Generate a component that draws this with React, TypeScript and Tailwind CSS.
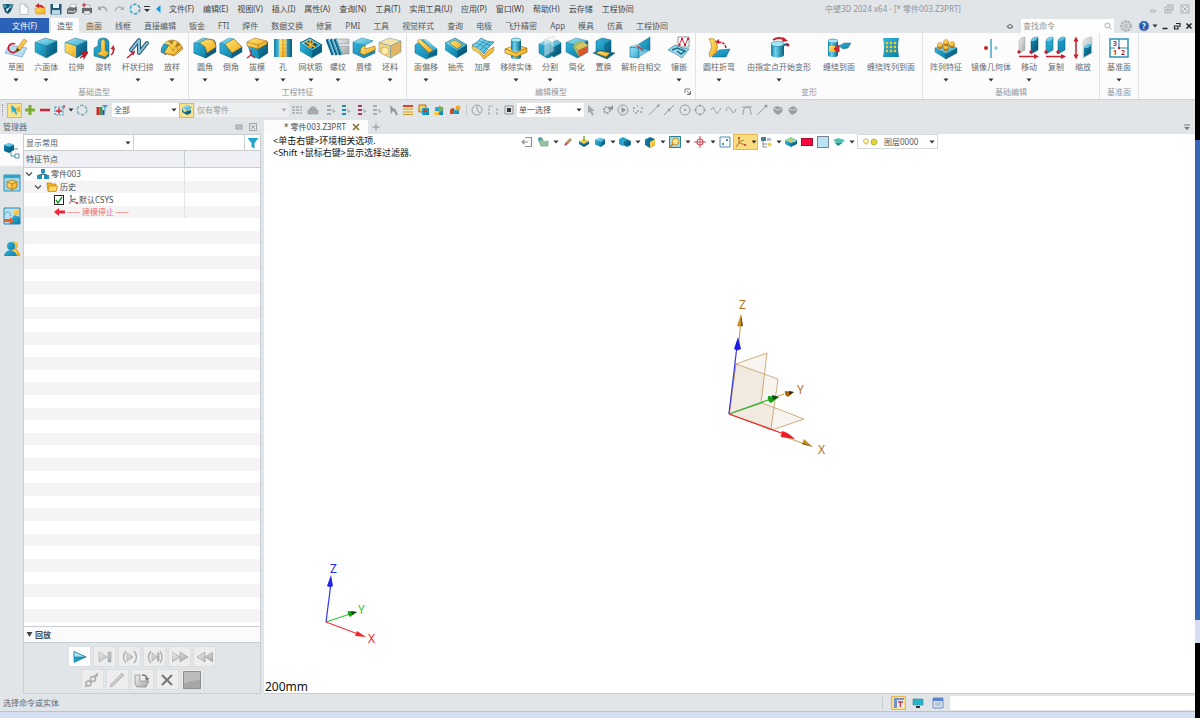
import { ReactNode } from 'react'
import clsx from 'clsx'

const MENUS = ['文件(F)', '编辑(E)', '视图(V)', '插入(I)', '属性(A)', '查询(N)', '工具(T)', '实用工具(U)', '应用(P)', '窗口(W)', '帮助(H)', '云存储', '工程协同']

const TABS = ['曲面', '线框', '直接编辑', '钣金', 'FTI', '焊件', '数据交换', '修复', 'PMI', '工具', '视觉样式', '查询', '电极', '飞升精密', 'App', '模具', '仿真', '工程协同']

const T = 'url(#tealTop)'
const L = 'url(#tealLeft)'
const R = 'url(#tealRight)'
const Y = 'url(#gold)'
const G = 'url(#grey)'

function Gradients() {
  return (
    <svg className="absolute h-0 w-0" aria-hidden="true">
      <defs>
        <linearGradient id="tealTop" x1="0" y1="0" x2="1" y2="1"><stop offset="0" stopColor="#9fe6f5" /><stop offset="1" stopColor="#2fa9cf" /></linearGradient>
        <linearGradient id="tealLeft" x1="0" y1="0" x2="1" y2="1"><stop offset="0" stopColor="#35b5dc" /><stop offset="1" stopColor="#0b7fa8" /></linearGradient>
        <linearGradient id="tealRight" x1="0" y1="0" x2="1" y2="1"><stop offset="0" stopColor="#1488b0" /><stop offset="1" stopColor="#07516f" /></linearGradient>
        <linearGradient id="gold" x1="0" y1="0" x2="1" y2="1"><stop offset="0" stopColor="#ffe873" /><stop offset="1" stopColor="#f2a81d" /></linearGradient>
        <linearGradient id="grey" x1="0" y1="0" x2="1" y2="1"><stop offset="0" stopColor="#f1f1f1" /><stop offset="1" stopColor="#a2a6a8" /></linearGradient>
        <linearGradient id="cyl" x1="0" y1="0" x2="1" y2="0"><stop offset="0" stopColor="#0d7ea6" /><stop offset=".35" stopColor="#6ed3ec" /><stop offset="1" stopColor="#07607f" /></linearGradient>
      </defs>
    </svg>
  )
}

function Svg({ s = 12, className = '', children }: { s?: number; className?: string; children: ReactNode }) {
  return <svg viewBox={`0 0 ${s} ${s}`} width={s} height={s} className={clsx('shrink-0', className)} fill="none" aria-hidden="true">{children}</svg>
}

function Cube({ t = T, l = L, r = R }: { t?: string; l?: string; r?: string }) {
  return (
    <g stroke="#0c5d7a" strokeWidth=".4" strokeLinejoin="round">
      <path d="M1 6.500 11 2 23 5 12.500 10z" fill={t} />
      <path d="M1 6.500 12.500 10v12L1 16z" fill={l} />
      <path d="M12.500 10 23 5v11l-10.500 6z" fill={r} />
    </g>
  )
}

function Slab() {
  return (
    <g stroke="#0c5d7a" strokeWidth=".4" strokeLinejoin="round">
      <path d="M1 12 11 8l12 4-11 6z" fill={T} />
      <path d="m1 12 11 6v5L1 16z" fill={L} />
      <path d="M23 12 12 18v5l11-6z" fill={R} />
    </g>
  )
}

function Cyl({ x, y, w, h }: { x: number; y: number; w: number; h: number }) {
  return (
    <g>
      <path d={`M${x} ${y}v${h}a${w / 2} ${w / 5} 0 0 0 ${w} 0v${-h}z`} fill="url(#cyl)" />
      <ellipse cx={x + w / 2} cy={y} rx={w / 2} ry={w / 5} fill="#a5e6f4" stroke="#0d6f93" strokeWidth=".5" />
    </g>
  )
}

const BIG: Record<string, ReactNode> = {
  草图: <>
    <path d="m1 17 4-8 18 3-5 9z" fill="#b9dcf0" stroke="#5d9cc4" strokeWidth=".6" />
    <path d="M11 8a4.500 4.500 0 1 0 2 6" stroke="#c71f2d" strokeWidth="1.700" />
    <path d="m12 16 1-4 7-9 3 2-7 9z" fill={Y} stroke="#a8660c" strokeWidth=".5" />
    <path d="m12 16 1-4 3 2z" fill="#473022" />
  </>,
  六面体: <Cube />,
  拉伸: <>
    <Cube l={Y} />
    <path d="m16 22 4-3m0 0v3l4-6-6 1z" stroke="#b9141f" strokeWidth="1.200" fill="#d91f2b" />
  </>,
  旋转: <>
    <path d="M2 20V12l4-2V6q0-4 5-4t6 4v14l-4 3z" fill={L} stroke="#0c5d7a" strokeWidth=".5" />
    <path d="M9 5q2-3 4 0v9l4 3-4 4-8-3 4-3z" fill={Y} stroke="#8d5b0a" strokeWidth=".4" />
    <path d="M19 19q3-2 2.500-7" stroke="#c71f2d" strokeWidth="1.500" /><path d="m18.500 13 3-4 1.500 5z" fill="#c71f2d" />
  </>,
  杆状扫掠: <>
    <path d="M5 14 13 4v13l8-10" stroke="#245a75" strokeWidth="4" strokeLinejoin="round" strokeLinecap="round" />
    <path d="M5 14 13 4v13l8-10" stroke="#8cc6dc" strokeWidth="2" strokeLinejoin="round" strokeLinecap="round" />
    <path d="m1 22 6-5" stroke="#c71f2d" strokeWidth="1.500" /><path d="m4.500 16.500 5-2-2 5z" fill="#c71f2d" />
  </>,
  放样: <>
    <path d="M1 16Q3 4 12 4q8 0 11 9l-9 7z" fill={Y} stroke="#936013" strokeWidth=".5" />
    <path d="M1 16q0-5 3-8l5 1-3 10z" fill={L} stroke="#0c5d7a" strokeWidth=".4" />
    <path d="m8 5 6-1-2 5zM17 6l4 3-6 3z" fill="#a8842b" />
    <path d="m4 17 5-8 4 6 3-6 2 6 4-4-8 8z" fill={Y} stroke="#936013" strokeWidth=".5" />
  </>,
  圆角: <>
    <path d="M1 7 10 2l11 2q2 2 2 6v6l-10 6-12-5z" fill={R} stroke="#0c5d7a" strokeWidth=".4" />
    <path d="M1 7q10-1 12 6v9L1 17z" fill={L} stroke="#0c5d7a" strokeWidth=".4" />
    <path d="m1 7 9-5 4 1-8 4z" fill={T} />
    <path d="m6 7 8-4 6 1q3 3 3 7l-9 6Q13 9 6 7z" fill={Y} stroke="#8d5b0a" strokeWidth=".4" />
  </>,
  倒角: <>
    <path d="m1 7 9-5 5 1 8 8v5l-10 6-12-5z" fill={R} stroke="#0c5d7a" strokeWidth=".4" />
    <path d="m1 7 5 1 7 9v5L1 17z" fill={L} stroke="#0c5d7a" strokeWidth=".4" />
    <path d="m1 7 9-5 5 1-9 5z" fill={T} />
    <path d="m6 8 9-5 8 8-10 6z" fill={Y} stroke="#8d5b0a" strokeWidth=".4" />
  </>,
  拔模: <>
    <path d="m2 8 10 3 11-5v11l-9 6-8-3z" fill={L} />
    <path d="m12 11 11-5v11l-9 6z" fill={R} />
    <path d="m2 6 8-4 12 3v3l-9 5-11-3z" fill={Y} stroke="#8d5b0a" strokeWidth=".5" /><path d="m2 6 11 3 9-4m-9 4v4" stroke="#8d5b0a" strokeWidth=".5" />
    <path d="M6 14v5l-4 3m4-3 4 3" stroke="#c71f2d" strokeWidth="1.300" />
  </>,
  孔: <>
    <path d="M8.500 3h7v18h-7z" fill={Y} /><path d="M12 3v18" stroke="#9b5d10" strokeWidth=".7" strokeDasharray="3 1" />
    <path d="M3 3h5.500v18H3zM15.500 3H21v18h-5.500z" fill="url(#cyl)" />
  </>,
  网状筋: <>
    <path d="m1 7 10-5 12 7v7l-10 6L1 15z" fill={R} /><path d="m1 7 10-5 12 7-10 6z" fill={T} stroke="#0c5d7a" />
    <path d="m5 7 6-3 8 5-6 4z" fill="#174c5e" /><path d="m7 6 9 5M15 6l-6 5M11 4l1 8" stroke="#f1b62d" strokeWidth="1.500" /><path d="m1 7 12 8v7L1 15z" fill={L} />
  </>,
  螺纹: <>
    <path d="M8 3h15v5H12zM12 10h11v8H12z" fill={G} stroke="#7c8286" strokeWidth=".5" />
    <path d="m1 3 6 16M5 3l6 16M9 3l6 16" stroke="#0e6588" strokeWidth="3.200" /><path d="m2 3 6 16M6 3l6 16M10 3l6 16" stroke="#65c5e1" strokeWidth="1" />
  </>,
  唇缘: <>
    <path d="M1 6 10 2l11 3-8 4v6l10-3v5l-11 5L1 17z" fill={L} stroke="#0c5d7a" strokeWidth=".5" />
    <path d="m1 6 9-4 11 3-8 4z" fill={T} /><path d="m9 12 4-3v4l10-3v4l-11 5-4-2z" fill={Y} stroke="#8d5b0a" strokeWidth=".5" />
  </>,
  坯料: <g opacity=".8">
    <Cube t="#f6dc98" l="#f3c965" r="#dca33e" /><circle cx="7" cy="15" r="4" fill="#ffe98f" stroke="#a97c2b" strokeWidth=".6" />
  </g>,
  面偏移: <>
    <path d="m1 9 8-6 14 10v6l-11 4L1 17z" fill={L} stroke="#0c5d7a" strokeWidth=".5" />
    <path d="m3 5 3-2 13 11-4 3z" fill={Y} stroke="#8d5b0a" strokeWidth=".4" /><path d="m9 3 3 0 11 10-4 1z" fill={T} /><path d="m23 13-8 4-2 5 10-4z" fill={R} />
  </>,
  抽壳: <>
    <path d="m1 7 10-5 12 7v7l-10 6L1 14z" fill={R} /><path d="m1 7 10-5 12 7-10 6z" fill={T} stroke="#0c5d7a" strokeWidth=".5" />
    <path d="m5 7 6-3 8 5-6 4z" fill={Y} stroke="#0c5d7a" strokeWidth=".5" /><path d="m1 7 12 8v7L1 14z" fill={L} />
  </>,
  加厚: <>
    <path d="M1 10q6 2 12 10 4-7 10-9l-1 5-9 7Q7 15 2 14z" fill={Y} stroke="#8d5b0a" strokeWidth=".5" />
    <path d="M1 9q5-2 9-7 5 4 13 4-6 5-10 12Q8 11 1 9z" fill={T} stroke="#0c5d7a" strokeWidth=".6" />
    <path d="M5 7q8 2 11 7M8 5q7 2 11 5M5 11q5-2 9-7M9 14q4-5 10-8" stroke="#0d7ea6" strokeWidth=".6" />
  </>,
  移除实体: <>
    <Cyl x={7} y={14} w={10} h={7} />
    <path d="m1 13 11-4 11 3v4l-11 5-11-4z" fill={Y} stroke="#8d5b0a" strokeWidth=".6" /><path d="m1 13 11 4 11-5" stroke="#8d5b0a" strokeWidth=".6" />
    <Cyl x={7} y={4} w={10} h={9} />
  </>,
  分割: <>
    <path d="m1 8 9-4 3 2v15l-4 1-8-5z" fill={L} stroke="#0c5d7a" strokeWidth=".5" /><path d="m12 8 7-4 4 3v10l-7 4-4-2z" fill={R} stroke="#0c5d7a" strokeWidth=".5" />
    <path d="m1 8 9-4 3 2-6 3zM12 8l7-4 4 3-7 4z" fill={T} /><path d="m6 4 10-4v15L6 21z" fill="#fff" opacity=".45" stroke="#7b868c" strokeWidth=".6" />
  </>,
  简化: <>
    <Cube /><path d="M8 11q2-6 8-6l7 4-9 12z" fill="#9fb968" /><path d="m13 14 10-4v6l-9 5z" fill="#d9572e" /><path d="m10 11 8-5 5 3-9 5z" fill="#d8c45c" />
  </>,
  置换: <>
    <path d="m4 5 6-3 9 2v12l-7 3-8-3z" fill={L} stroke="#0c5d7a" strokeWidth=".5" /><path d="m12 8 7-4v12l-7 3z" fill={R} />
    <path d="m1 17 6-3 16 3-8 6z" fill={R} stroke="#0c5d7a" strokeWidth=".5" /><path d="m4 17 4-2 10 2-4 4z" fill={Y} stroke="#8d5b0a" strokeWidth=".5" />
  </>,
  解析自相交: <>
    <path d="m1 11 9 1v10l-9-1z" fill={T} stroke="#0c6c8d" strokeWidth=".6" /><path d="m10 8 11-7v13l-9 2z" fill={L} stroke="#0c5d7a" strokeWidth=".5" />
    <path d="m1 11 9-3 3 4 8 2-11 7V12z" fill={T} opacity=".8" stroke="#0c5d7a" strokeWidth=".4" /><path d="m8 10 6 4" stroke="#d1232d" strokeWidth="1.500" />
  </>,
  镶嵌: <>
    <path d="M11 1h11v10H11z" fill="#fff" stroke="#60686c" strokeWidth=".7" /><path d="m12 9 3-6 3 6 3-6" stroke="#c71f2d" /><path d="M11.500 8h2v2h-2zM14 2h2v2h-2zM17 8h2v2h-2zM20 2h2v2h-2z" fill="#c71f2d" />
    <path d="m1 14 7-5q8 4 14 4l-7 9Q8 17 1 14z" fill="#9ed8ea" stroke="#3483a1" strokeWidth=".7" /><path d="m5 14 5-2 8 3-4 3-4-3" stroke="#176b8b" strokeWidth="1.500" />
  </>,
  圆柱折弯: <>
    <path d="m5 21 7-7 11-1-4 8z" fill={L} stroke="#0c5d7a" strokeWidth=".5" />
    <path d="M2 3q4-2 7 2 3 6 0 12l-6 4-1-4q5-6 0-14z" fill={Y} stroke="#8d5b0a" strokeWidth=".5" />
    <path d="M11 6q7 0 8 6" stroke="#c71f2d" strokeWidth="1.500" strokeDasharray="3 1" /><path d="m12 3-4 3 4 2z" fill="#c71f2d" />
  </>,
  由指定点开始变形: <>
    <Cyl x={4} y={8} w={13} h={11} /><path d="m17 9 4-1" stroke="#0c5d7a" strokeWidth="2" />
    <path d="M6 4q6-4 12 0" stroke="#c71f2d" strokeWidth="1.800" /><path d="m16 1 5 4-6 1z" fill="#c71f2d" /><circle cx="21" cy="9" r="1.500" fill="#c71f2d" />
  </>,
  缠绕到面: <>
    <Cyl x={1} y={5} w={10} h={14} /><path d="M2 10h6v6H2z" fill={Y} /><path d="m12 9-5 4 5 3z" fill="#d1232d" stroke="#d1232d" /><path d="m12 10 5-3 7 0-3 5-5 1z" fill={L} stroke="#0c5d7a" strokeWidth=".4" />
  </>,
  缠绕阵列到面: <>
    <path d="M4 2h16q-2 8 0 19H4q2-9 0-19z" fill={L} /><path d="M7 6h2v2H7zm4 0h2v2h-2zm4 0h2v2h-2zM7 10h2v2H7zm4 0h2v2h-2zm4 0h2v2h-2zM7 14h2v2H7zm4 0h2v2h-2zm4 0h2v2h-2z" fill="#f6df45" stroke="#d4b52a" strokeWidth=".5" />
  </>,
  阵列特征: <>
    <Slab />
    {[[6, 9], [12, 11], [12, 6], [18, 8]].map(([x, y]) => <g key={`${x}${y}`}><path d={`M${x - 2.5} ${y}v3q2.500 2 5 0v-3z`} fill="#b96b10" /><circle cx={x} cy={y} r="2.500" fill={Y} stroke="#9b5d10" strokeWidth=".4" /></g>)}
  </>,
  镜像几何体: <><path d="M12 3v19" stroke="#4da1bd" strokeWidth="1.500" /><circle cx="7" cy="12" r="2" fill="#c71f2d" /><circle cx="17" cy="12" r="1.800" fill="#8ecde0" /></>,
  移动: <>
    <path d="M2 5q1-4 6-4v13l-6 3z" fill={G} stroke="#9ca1a4" strokeWidth=".5" /><path d="M14 5q1-4 7-4v13l-7 4z" fill={R} stroke="#0c5d7a" strokeWidth=".5" /><path d="M14 5q1-4 7-4-1 5-7 4" fill={T} />
    <circle cx="2" cy="16" r="1.700" fill="#c71f2d" /><circle cx="14" cy="16" r="1.700" fill="#c71f2d" /><path d="M2 20.500h16" stroke="#c71f2d" strokeWidth="1.500" /><path d="m17 18 5 2.500-5 2.500z" fill="#c71f2d" />
  </>,
  复制: <>
    <path d="M2 5q1-4 7-4v13l-7 4zM14 5q1-4 7-4v13l-7 4z" fill={L} stroke="#0c5d7a" strokeWidth=".5" /><path d="M2 5q1-4 7-4-1 5-7 4M14 5q1-4 7-4-1 5-7 4" fill={T} />
    <circle cx="2" cy="16" r="1.700" fill="#c71f2d" /><circle cx="14" cy="16" r="1.700" fill="#c71f2d" /><path d="M2 20.500h16" stroke="#c71f2d" strokeWidth="1.500" /><path d="m17 18 5 2.500-5 2.500z" fill="#c71f2d" />
  </>,
  缩放: <>
    <path d="M12 6q2-5 9-5v16l-9 5z" fill={G} stroke="#b3b7b9" strokeWidth=".5" /><path d="M13 12q1-4 7-4v9l-7 4z" fill={R} /><path d="M13 12q1-4 7-4-1 5-7 4" fill={T} />
    <path d="M5 4v17" stroke="#c71f2d" strokeWidth="1.500" /><path d="m2.500 5.500 2.500-5 2.500 5zM2.500 18.500l2.500 5 2.500-5z" fill="#c71f2d" />
  </>,
  基准面: <>
    <path d="M3 3h18v18H3z" fill="#fff" stroke="#2f92b5" strokeWidth="1.500" /><path d="M12 3v9h9M3 12h5" stroke="#2f92b5" strokeWidth="1.200" /><circle cx="12" cy="12" r="1.200" fill="#c71f2d" />
    <g fill="#c71f2d" fontSize="7" fontWeight="700" fontFamily="Noto Sans, sans-serif"><text x="6" y="10">3</text><text x="6" y="19">1</text><text x="14" y="19">2</text></g>
  </>,
}

const GROUPS: { name: string; width: string; launcher?: boolean; items: [string, boolean][] }[] = [
  { name: '基础造型', width: 'w-[189px]', items: [['草图', true], ['六面体', true], ['拉伸', false], ['旋转', false], ['杆状扫掠', true], ['放样', true]] },
  { name: '工程特征', width: 'w-[218px]', items: [['圆角', true], ['倒角', false], ['拔模', true], ['孔', true], ['网状筋', true], ['螺纹', true], ['唇缘', false], ['坯料', true]] },
  { name: '编辑模型', width: 'w-[289px]', launcher: true, items: [['面偏移', true], ['抽壳', false], ['加厚', false], ['移除实体', true], ['分割', true], ['简化', false], ['置换', false], ['解析自相交', false], ['镶嵌', true]] },
  { name: '变形', width: 'w-[227px]', items: [['圆柱折弯', true], ['由指定点开始变形', true], ['缠绕到面', false], ['缠绕阵列到面', false]] },
  { name: '基础编辑', width: 'w-[177px]', items: [['阵列特征', true], ['镜像几何体', true], ['移动', true], ['复制', false], ['缩放', false]] },
  { name: '基准面', width: 'w-[39px]', items: [['基准面', true]] },
]

function Caret({ className = 'text-[#333]' }: { className?: string }) {
  return <svg viewBox="0 0 6 4" width="6" height="4" className={clsx('shrink-0', className)} aria-hidden="true"><path d="M.500.500h5L3 3.500z" fill="currentColor" /></svg>
}

function Combo({ label, value, className, tone = 'text-[#555]', pad = 'pl-0.5' }: { label: string; value: string; className: string; tone?: string; pad?: string }) {
  return (
    <div className={clsx('relative flex items-center', className)}>
      <select aria-label={label} className={clsx('h-full w-full appearance-none bg-transparent leading-3 outline-none', tone, pad)}>
        <option>{value}</option>
      </select>
      <Caret className={clsx('pointer-events-none absolute right-0.5', tone === 'text-[#555]' ? 'text-[#333]' : 'text-[#aaa]')} />
    </div>
  )
}

function IconButton({ label, className = 'w-4', children }: { label: string; className?: string; children: ReactNode }) {
  return <button type="button" aria-label={label} className={clsx('flex shrink-0 items-center justify-center', className)}>{children}</button>
}

const hexagon = (c: string) => <Svg><circle cx="6" cy="6" r="4.800" stroke={c} strokeWidth="1.500" strokeDasharray="3.500 1.500" /></Svg>

const QAT: [string, ReactNode][] = [
  ['ZW3D', <Svg><path d="M.500 1.500 5 1l6.500.500L9 8l-3 3-3-2z" fill="#14506b" /><path d="m1 2 4 1-2 2zM7 3l4-1-3 4z" fill="#49c3e4" /><path d="m4 6 4-2-3 5z" fill="#e2f5fa" /></Svg>],
  ['新建', <Svg><path d="M2 1h5l3 3v7.500H2z" fill="#fff" stroke="#a3a8ac" strokeWidth=".7" /><path d="M7 1v3h3" stroke="#a3a8ac" strokeWidth=".7" /></Svg>],
  ['打开', <Svg><path d="M1 5h4l1-1h5v7H2z" fill={Y} stroke="#c48413" strokeWidth=".5" /><path d="M9 5Q8 2 4 3" stroke="#d2232a" strokeWidth="1.800" /><path d="M5 0v5L1 3z" fill="#d2232a" /></Svg>],
  ['保存', <Svg><path d="M.500 1h11v10.500H.500z" fill="#245974" /><path d="M3 1h6v4H3z" fill="#e8f3f8" /><path d="M2 7h8v4.500H2z" fill="#b6d7e3" /></Svg>],
  ['打印', <Svg><path d="m1 6 3-2h7v4l-3 3H1z" fill="#6c7176" /><path d="m4 4 1-3h5L9 5z" fill="#f5f5f5" stroke="#777" strokeWidth=".4" /><path d="m2 8 6 1 1-2" stroke="#d8dbdd" /></Svg>],
  ['批量打印', <Svg><path d="M1 5h10v5H1z" fill="#64696d" /><path d="M3 2h6v3H3zM3 8h6v3H3z" fill="#f5f5f5" stroke="#777" strokeWidth=".5" /><path d="M1 2h4M3 0v4" stroke="#c71f2d" /></Svg>],
  ['撤销', <Svg><path d="M2 6q5-5 8 2" stroke="#9ba1a6" strokeWidth="1.400" /><path d="M1 3v4h4z" fill="#9ba1a6" /></Svg>],
  ['重做', <Svg><path d="M10 6Q5 1 2 8" stroke="#aeb3b7" strokeWidth="1.400" /><path d="M11 3v4H7z" fill="#aeb3b7" /></Svg>],
  ['重生成', hexagon('#3ca3c0')],
]

const gs = { stroke: '#989da1', strokeWidth: 1 }
const flagIcon = (c: string) => <Svg><path d="M2 1h4v2H2zM2 5h4v2H2zM2 9h4v2H2z" fill={c} /><path d="m7 4 4 4H9l-1 2z" fill="#b3b8bb" /></Svg>

const FILTERS: [string, ReactNode][] = [
  ['全选', flagIcon('#a9adb0')],
  ['特征', flagIcon('#2489a8')],
  ['草图选择', flagIcon('#a03c5c')],
  ['取消选择', flagIcon('#a9adb0')],
  ['箭头', <Svg><path d="m3 1 6 6H6l-2 3z" fill="#91969a" /><path d="m7 5 3 6" stroke="#91969a" strokeWidth="2" /></Svg>],
  ['列表', <Svg><path d="M1 1h10v10H1z" fill="#f2e9bd" /><path d="M1 2h10" stroke="#d9422e" strokeWidth="2" /><path d="M1 5h10M1 8h10M1 10.500h10" stroke="#c69732" /></Svg>],
  ['图层', <Svg><path d="M1 1h7v7H1z" fill={Y} stroke="#b96b10" /><path d="M4 4h7v7H4z" fill={L} /><path d="M5 5h4v3H5z" fill="#d63b2f" /></Svg>],
  ['外观', <Svg><path d="M2 3h8v8H2z" fill={L} /><path d="m6 1 5 4-5 4z" fill="#7fae50" /><path d="M1 7h5v4H1z" fill={Y} /></Svg>],
  ['材料', <Svg><path d="M1 6q3-4 5 0v4H1z" fill="#c64b2a" /><path d="M5 6h5v4H5z" fill={L} /><circle cx="9" cy="4" r="2.500" fill="#eda62b" /></Svg>],
]

const SNAPS: [string, ReactNode][] = [
  ['选择', <Svg><path d="m2 1 7 6H6l2 4-2 .500L4 8 2 9z" fill="#a5aaae" /></Svg>],
  ['设置', <Svg><circle cx="6" cy="6" r="3" {...gs} strokeWidth="2" strokeDasharray="2 1" /><path d="m7 5 5-4v5z" fill="#8f9498" /></Svg>],
  ['播放', <Svg><circle cx="6" cy="6" r="5" {...gs} /><path d="M4.500 3 9 6 4.500 9z" fill="#90959a" /></Svg>],
  ['点', <Svg><path d="M1 4h2M5 7h2M9 4h2M3 9h2M8 8h2M5 2h1M1 7h1" {...gs} strokeWidth="1.500" /></Svg>],
  ['直线', <Svg><path d="m1 11 10-10" {...gs} /><circle cx="10.500" cy="1.500" r="1.200" fill="#989da1" /></Svg>],
  ['中点', <Svg><path d="m1 11 10-10" {...gs} /><circle cx="6" cy="6" r="1.400" fill="#989da1" /></Svg>],
  ['圆心', <Svg><circle cx="6" cy="6" r="5" {...gs} /><circle cx="6" cy="6" r="1" fill="#888" /></Svg>],
  ['象限点', <Svg><circle cx="6" cy="6" r="4.500" {...gs} /><path d="M6 .500v2M6 9.500v2M.500 6h2M9.500 6h2" {...gs} strokeWidth="1.500" /></Svg>],
  ['样条', <Svg><path d="m1 6 2-3 4 7 4-6" {...gs} strokeDasharray="3 1" /></Svg>],
  ['曲线', <Svg><path d="M1 7q2-7 5-1t5-1" {...gs} /></Svg>],
  ['相切', <Svg><path d="M1 3h10M2 11q0-8 4-8t4 8" {...gs} /></Svg>],
  ['端点', <Svg><path d="m1 11 9-9" {...gs} /><circle cx="10" cy="2" r="1.500" fill="#989da1" /></Svg>],
  ['面', <Svg><path d="m1 4 4-2 6 2-1 4-4 3-4-3z" fill="#999ea1" /><path d="m1 4 5 2 5-2" stroke="#d2d4d5" /></Svg>],
  ['曲面', <Svg><path d="m1 5 5-3 5 3-2 4-4 2-3-3z" fill="#999ea1" /><path d="m1 5 5 1 5-1" stroke="#d2d4d5" /></Svg>],
]

function TitleBar() {
  return (
    <div className="flex h-[18px] items-center px-0.5">
      <div className="flex w-[139px] justify-between">
        {QAT.map(([label, icon]) => <IconButton key={label} label={label} className="w-3">{icon}</IconButton>)}
      </div>
      <IconButton label="自定义" className="w-3"><Svg s={8}><path d="M1 1.500h6" stroke="#333" /><path d="M1 4h6L4 7z" fill="#333" /></Svg></IconButton>
      <IconButton label="收起" className="w-2.5"><Svg s={10}><path d="M7.500 1v8L3 5z" fill="#0b9be0" /></Svg></IconButton>
      <nav className="ml-1.5 flex gap-[9px] whitespace-nowrap text-[#3f4346]">
        {MENUS.map(m => <button key={m} type="button">{m}</button>)}
      </nav>
      <h1 className="ml-auto whitespace-nowrap text-[#8f9498]">中望3D 2024 x64 - [* 零件003.Z3PRT]</h1>
      <div className="ml-[184px] flex">
        <IconButton label="最小化"><Svg><path d="M3.500 7h5v2h-5z" stroke="#a0a4a8" strokeWidth=".7" /></Svg></IconButton>
        <IconButton label="还原"><Svg><path d="M4 2h6v6M2 4h6v6H2zM4 6h2v2H4z" stroke="#a0a4a8" strokeWidth=".9" /></Svg></IconButton>
        <IconButton label="关闭"><Svg><path d="M2 2h8v8H2zM3 3l6 6M9 3 3 9" stroke="#a0a4a8" strokeWidth=".8" /></Svg></IconButton>
      </div>
    </div>
  )
}

function TabBar() {
  return (
    <div className="flex h-[15px] items-stretch">
      <button type="button" className="w-[49px] bg-[#2a62b8] text-white">文件(F)</button>
      <div className="ml-0.5 flex whitespace-nowrap text-[#55595c]">
        <button type="button" className="mr-[7px] w-7 bg-[#fcfcfd]">造型</button>
        <div className="flex gap-[13px]">
          {TABS.map(t => <button key={t} type="button">{t}</button>)}
        </div>
      </div>
      <div className="ml-auto flex items-center">
        <IconButton label="折叠功能区"><Svg s={8}><path d="M1 5q3-5 6 0M2 4v2h4V4" stroke="#555" strokeWidth=".9" /></Svg></IconButton>
        <label className="ml-[3px] flex h-[14px] w-[93px] items-center bg-white px-0.5">
          <input aria-label="查找命令" placeholder="查找命令" className="w-full min-w-0 outline-none placeholder:text-[#8f9396]" />
          <Svg s={8}><circle cx="3.500" cy="3.500" r="2.500" stroke="#aaa" /><path d="m5.500 5.500 2 2" stroke="#aaa" /></Svg>
        </label>
        <IconButton label="选项" className="ml-1 w-4"><Svg><circle cx="6" cy="6" r="5" stroke="#a4a8ab" strokeWidth="1.500" strokeDasharray="2.500 1" /><circle cx="6" cy="6" r="3.500" stroke="#b9bcbe" /><circle cx="6" cy="6" r="1.500" stroke="#a4a8ab" /></Svg></IconButton>
        <IconButton label="帮助" className="ml-0.5 w-4"><Svg><circle cx="6" cy="6" r="5" fill="#2457ad" stroke="#8ba5d0" /><text x="4" y="9" fontSize="8" fontWeight="700" fill="#fff">?</text></Svg></IconButton>
        <Caret className="text-[#333]" />
        <IconButton label="最小化文档" className="ml-px w-3"><Svg s={8}><path d="M1.500 6.500h5" stroke="#222" strokeWidth="1.500" /></Svg></IconButton>
        <IconButton label="还原文档" className="w-3"><Svg s={8}><path d="M3 1.500h4V5M1.500 4H5v3H1.500z" stroke="#222" strokeWidth="1.200" /></Svg></IconButton>
        <IconButton label="关闭文档" className="w-3"><Svg s={8}><path d="m1.500 1.500 5 5m0-5-5 5" stroke="#222" strokeWidth="1.500" /></Svg></IconButton>
      </div>
    </div>
  )
}

function Ribbon() {
  return (
    <div className="flex h-[67px] border-b border-[#cdd2d6] bg-[#fcfcfd]">
      {GROUPS.map(g => (
        <section key={g.name} className={clsx('relative flex shrink-0 flex-col border-r border-[#dfe3e6] pt-[3px]', g.width)}>
          <div className="flex justify-between px-[3px]">
            {g.items.map(([name, drop]) => (
              <button key={name} type="button" className="flex min-w-[26px] flex-col items-center text-[#666a6d]">
                <Svg s={24}>{BIG[name]}</Svg>
                <span className="whitespace-nowrap px-1 leading-[14px]">{name}</span>
                <span className="flex h-[12px] items-center">{drop && <Caret />}</span>
              </button>
            ))}
          </div>
          <h2 className="text-center leading-3 text-[#92979b]">{g.name}</h2>
          {g.launcher && (
            <button type="button" aria-label="更多" className="absolute right-1 bottom-1">
              <Svg s={7}><path d="M6 1H1v4M3 3l3 3M6.500 3v3.500H3" stroke="#777" /></Svg>
            </button>
          )}
        </section>
      ))}
    </div>
  )
}

function Separator() {
  return <span className="h-3 w-px shrink-0 bg-[#c6cbcf]" />
}

function SelectionBar() {
  return (
    <div className="flex h-5 items-center">
      <span className="ml-0.5 h-3 border-l border-dotted border-[#999]" />
      <IconButton label="拾取" className="ml-1 h-[15px] w-[15px] border border-[#e2b94b] bg-[#fbe08a]"><Svg><path d="m2 1 1 8 2-2 2 4 1-1-1-4h2z" fill="#29a9c9" /><path d="M8 3h3v5H9z" fill="#f0b429" /></Svg></IconButton>
      <IconButton label="添加" className="w-[15px]"><Svg><path d="M6 1v10M1 6h10" stroke="#7cae2f" strokeWidth="3" /></Svg></IconButton>
      <IconButton label="移除" className="w-[15px]"><Svg><path d="M1 6h10" stroke="#cf2338" strokeWidth="2.500" /></Svg></IconButton>
      <IconButton label="框选"><Svg><path d="M1 3h8v8H1z" stroke="#4c9fba" strokeWidth="1.200" strokeDasharray="2 1" /><path d="M5 4v6M2 7h6M10 1v3" stroke="#c71f2d" strokeWidth="1.300" /></Svg></IconButton>
      <Caret />
      <IconButton label="多边形">{hexagon('#7fabb9')}</IconButton>
      <IconButton label="过滤器" className="ml-1 w-4"><Svg><path d="M.500 3h3v8h-3z" fill="#d02632" /><path d="M3.500 3h3v8h-3z" fill="#3f8f42" /><path d="M6.500 6h2v5h-2z" fill="#284c9b" /><path d="M6 1h6L9.500 4v3h-1V4z" fill="#3aa6cf" /></Svg></IconButton>
      <Combo label="过滤类型" value="全部" className="ml-0.5 h-[14px] w-[67px] bg-white" />
      <IconButton label="零件过滤" className="mr-px h-[15px] w-[15px] border border-[#e2b94b] bg-[#fbe08a]"><Svg><path d="m1 4 5-3 5 2-4 4z" fill={T} /><path d="m1 4 2 4 7-2v3l-4 2-5-3z" fill={R} /></Svg></IconButton>
      <Combo label="过滤范围" value="仅有零件" tone="text-[#9a9ea1]" className="h-[14px] w-[94px] bg-[#eceef0]" />
      <IconButton label="拾取列表"><Svg><path d="M1 3h10M1 6h10M1 9h10" stroke="#a5a9ac" strokeWidth="1.500" strokeDasharray="3 1" /></Svg></IconButton>
      <IconButton label="锁定"><Svg><path d="M3 6V4q3-3 6 0v2M1 6h10v4H1z" fill="#a9adb0" stroke="#96999c" strokeWidth=".6" /></Svg></IconButton>
      <span className="ml-0.5"><Separator /></span>
      <div className="mr-1 flex w-[139px] justify-between">
        {FILTERS.map(([label, icon]) => <IconButton key={label} label={label} className="w-[15px]">{icon}</IconButton>)}
      </div>
      <Separator />
      <div className="ml-0.5 flex">
        <IconButton label="历史"><Svg><circle cx="6" cy="6" r="5" {...gs} /><path d="M6 2v4l3 3" {...gs} /></Svg></IconButton>
        <IconButton label="链"><Svg><path d="M2 11V2h4M10 11V4" {...gs} strokeDasharray="3 1" /></Svg></IconButton>
        <IconButton label="方框"><Svg><path d="M2 2h8v8H2z" stroke="#777" strokeWidth=".7" /><path d="M4 4h4v4H4z" fill="#333" /></Svg></IconButton>
      </div>
      <Combo label="选择方式" value="单一选择" className="h-[14px] w-[67px] bg-white" />
      <div className="flex w-[217px] justify-between">
        {SNAPS.map(([label, icon]) => <IconButton key={label} label={label} className="w-[15px]">{icon}</IconButton>)}
      </div>
    </div>
  )
}

const SIDE_TABS: [string, ReactNode][] = [
  ['历史管理', <Svg s={18}><path d="m1 4 5-2 5 2v5l-5 3-5-2z" fill={R} /><path d="m1 4 5-2 5 2-5 2z" fill={T} /><path d="M11 8h4M8 11v4h4M12 13h4v4h-4z" stroke="#5492ab" /></Svg>],
  ['装配管理', <Svg s={18}><path d="M1 1h16v16H1z" fill="#a5d5e7" stroke="#2f95b8" /><path d="M1 1h16v3H1z" fill="#28a6cb" /><path d="m4 8 5-2 5 2v5l-5 3-5-3z" fill={Y} stroke="#a0680f" strokeWidth=".7" /><path d="m4 8 5 2 5-2m-5 2v6" stroke="#a0680f" strokeWidth=".7" /></Svg>],
  ['视图管理', <Svg s={18}><path d="M1 1h16v16H1z" fill="#b9e2f0" stroke="#2e88aa" /><path d="m6 17 5-9 6 2v7z" fill={L} /><path d="M1 8q5-7 7 1" stroke="#62a4bd" /><circle cx="13" cy="5" r="3" fill={Y} /><path d="M1 12h6v-2l4 4-4 3v-2H1z" fill="#e3612c" /></Svg>],
  ['角色管理', <Svg s={18}><circle cx="11" cy="5" r="4" fill={Y} /><path d="M9 9h4l4 6-2 1-6-5z" fill={Y} stroke="#d99a1c" /><circle cx="8" cy="6" r="4" fill={L} /><path d="M1 16q1-5 6-6 6 1 7 6z" fill={L} /></Svg>],
]

const playBack: [string, ReactNode][] = [
  ['播放', <Svg s={14}><path d="M1 1.500 13 7 1 12.500z" fill={L} stroke="#0f7c9f" strokeWidth=".6" /><path d="M1 1.500 13 7H1z" fill="#a9e3f2" stroke="#0f7c9f" strokeWidth=".6" /></Svg>],
  ['下一步', <Svg s={14}><path d="m1 2 8 5-8 5zM10 2h3v10h-3z" fill={G} stroke="#9fa2a4" strokeWidth=".6" /></Svg>],
  ['播放到特征', <Svg s={16}><path d="m5 4 6 4-6 4z" fill={G} stroke="#999" strokeWidth=".6" /><path d="M4 2q-5 6 0 12M12 2q5 6 0 12" stroke="#aaa" strokeWidth="1.300" /></Svg>],
  ['播放到此处', <Svg s={16}><path d="m5 4 5 4-5 4zM10.500 4h1.500v8h-1.500z" fill={G} stroke="#999" strokeWidth=".6" /><path d="M4 2q-5 6 0 12M13 2q4 6 0 12" stroke="#aaa" strokeWidth="1.300" /></Svg>],
  ['快进', <Svg s={16}><path d="m0 3 8 5-8 5zM8 3l8 5-8 5z" fill={G} stroke="#999" strokeWidth=".6" /></Svg>],
  ['快退', <Svg s={16}><path d="M8 3 0 8l8 5zM16 3 8 8l8 5z" fill={G} stroke="#999" strokeWidth=".6" /></Svg>],
]

const editBack: [string, ReactNode][] = [
  ['链接', <Svg s={16}><g stroke="#aaadaf" strokeWidth="1.600"><circle cx="4.500" cy="11.500" r="2.500" /><circle cx="9" cy="7" r="2.500" /><path d="m10 5 4-4M1 15l2-2M11 4h3" /></g></Svg>],
  ['编辑', <Svg s={16}><path d="m1 15 1-3L13 1l2 2L4 14z" fill={G} stroke="#a3a6a8" strokeWidth=".6" /></Svg>],
  ['重定义', <Svg s={16}><path d="M1 3h5v6h9l-3 6H3l-2-3z" fill={G} stroke="#888" strokeWidth=".7" /><path d="M8 3q5 0 5 4" stroke="#777" strokeWidth="1.500" /><path d="M10.500 6h5L13 9z" fill="#777" /></Svg>],
  ['删除', <Svg s={14}><path d="m2 2 10 10m0-10L2 12" stroke="#77797b" strokeWidth="2.200" /></Svg>],
  ['停止', <Svg s={18}><path d="M.500.500h17v17H.500z" fill="#a6a6a6" stroke="#8e8e8e" /><path d="M1 1h16v8Q8 9 1 13z" fill="#bcbcbc" /></Svg>],
]

const check = <Svg s={10} className="pointer-events-none col-start-1 row-start-1"><path d="m2 5 2 3 4-6" stroke="#1c9a2f" strokeWidth="1.500" /></Svg>
const chevron = <Svg s={8}><path d="m1 2.500 3 3 3-3" stroke="#444" strokeWidth="1.100" /></Svg>

const TREE: ReactNode[] = [
  <div className="flex items-center gap-0.5 pl-px">{chevron}<Svg className="ml-0.5"><path d="M4 1h4v4H4zM0 7h5v4H0zM7 7h5v4H7z" fill="#2293ba" /><path d="M6 5v1M2 7l4-1 4 1" stroke="#22607b" /></Svg>零件003</div>,
  <div className="flex items-center gap-0.5 pl-[10px]">{chevron}<Svg className="ml-0.5"><path d="M1 3V2h4l1 1h4v7H2z" fill="#f5b21f" stroke="#b97a10" strokeWidth=".7" /><path d="M3 5h8.500L10 10.500H2z" fill="#ffd75b" stroke="#b97a10" strokeWidth=".6" /></Svg>历史</div>,
  <div className="flex items-center gap-1 pl-[30px]">
    <label className="grid place-items-center">
      <input type="checkbox" defaultChecked aria-label="默认CSYS" className="col-start-1 row-start-1 h-2.5 w-2.5 appearance-none border border-[#222] bg-white" />
      {check}
    </label>
    <span className="flex items-center"><Svg s={11}><path d="M3 1v6L1 10M3 7l7 2" stroke="#c9505a" /><path d="m3 6 5-1M2 2h2" stroke="#5c9671" strokeWidth="1.500" /><path d="M8 8h2v2H8z" fill="#c9505a" /></Svg>默认CSYS</span>
  </div>,
  <div className="flex items-center gap-px pl-[30px] text-[#f2686c]"><Svg><path d="M0 6 5 2v2.500h6v3H5V10z" fill="#f0263d" /></Svg>----- 建模停止 -----</div>,
]

function Manager() {
  return (
    <aside className="flex w-[262px] shrink-0 flex-col text-[#4b4f52]">
      <div className="flex h-[14px] items-center pr-px pl-[3px]">
        <h2 className="mr-auto text-[#666a6d]">管理器</h2>
        <IconButton label="浮动" className="w-3"><Svg s={8}><path d="M1 2h6v4H1zM2 4h4" stroke="#8f9498" /></Svg></IconButton>
        <IconButton label="关闭管理器"><Svg s={8}><path d="M.500.500h7v7h-7zM2 2l4 4m0-4L2 6" stroke="#8f9498" strokeWidth=".8" /></Svg></IconButton>
      </div>
      <div className="flex min-h-0 flex-1 pr-px">
        <div className="flex w-[23px] shrink-0 flex-col items-center">
          {SIDE_TABS.map(([label, icon], i) => (
            <IconButton key={label} label={label} className={clsx('w-full', i === 0 ? 'h-8 bg-[#fbfbfc]' : 'h-[33px]')}>{icon}</IconButton>
          ))}
        </div>
        <div className="flex min-w-0 flex-1 flex-col border border-[#c8cdd1]">
          <div className="flex h-4 border-b border-[#c8cdd1]">
            <Combo label="显示方式" value="显示常用" className="w-[110px] shrink-0 border-r border-[#c8cdd1] bg-white" />
            <input aria-label="筛选特征" className="w-0 min-w-0 flex-1 bg-white outline-none" />
            <IconButton label="筛选" className="w-4 border-l border-[#c8cdd1] bg-white"><Svg><path d="M.500 1h11L7.500 6v5.500l-3-1.500V6z" fill="#1fa5cc" /></Svg></IconButton>
          </div>
          <div className="flex h-[17px] items-center border-b border-[#c8cdd1] bg-[#eef0f5]">
            <span className="w-40 pl-0.5">特征节点</span>
            <span className="h-full border-l border-[#c8cdd1]" />
          </div>
          <ul className="flex min-h-0 flex-1 flex-col bg-white pb-1">
            {Array.from({ length: 36 }, (_, i) => (
              <li key={i} className={clsx('flex min-h-0 flex-1 items-center', i % 2 === 1 && 'bg-[#f4f4f5]')}>
                {TREE[i] && <><div className="w-40">{TREE[i]}</div><span className="h-full border-l border-[#e2e5e7]" /></>}
              </li>
            ))}
          </ul>
          <div className="flex h-[17px] items-center gap-0.5 border-y border-[#c8cdd1] bg-[#fbfbfc] pl-0.5 font-bold text-[#44484b]">
            <Svg s={7}><path d="M.500 1h6L3.500 6z" fill="#444" /></Svg>回放
          </div>
          <div className="flex flex-col items-center gap-0.5 py-[3px]">
            <div className="flex gap-0.5">
              {playBack.map(([label, icon], i) => <IconButton key={label} label={label} className={clsx('h-[21px] w-[23px] border border-[#dcdfe1]', i === 0 ? 'bg-white' : 'bg-[#ededee]')}>{icon}</IconButton>)}
            </div>
            <div className="flex gap-0.5">
              {editBack.map(([label, icon]) => <IconButton key={label} label={label} className="h-[21px] w-[23px] border border-[#dcdfe1] bg-[#ededee]">{icon}</IconButton>)}
            </div>
          </div>
        </div>
      </div>
    </aside>
  )
}

const miniCube = <Svg><path d="m1 3.500 5-2 5 1.500-4 2.500z" fill={T} /><path d="m1 3.500 6 2V11L1 8.500z" fill={L} /><path d="m7 5.500 4-2.500v5L7 11z" fill={R} /></Svg>

const VIEW: [string, ReactNode, boolean][] = [
  ['退出', <Svg><path d="M4 1.500h6.500v9H4M1 6h6M3.500 4 1 6l2.500 2" stroke="#8c9296" strokeWidth="1.200" /></Svg>, false],
  ['视角', <Svg><path d="m1 3 4-1 2 4 4-1v5H4z" fill="#94c5a0" stroke="#6a967b" strokeWidth=".6" /><circle cx="3" cy="3" r="2" fill="#5b9eb5" /></Svg>, true],
  ['画笔', <Svg><path d="M2 10 4 6l2 2z" fill="#c71f2d" /><path d="m4 6 4-4 2 2-4 4z" fill="#b98d67" /></Svg>, false],
  ['正视', <Svg><path d="m1 5 5-2 5 2-5 3z" fill={Y} /><path d="m1 5 5 3v3L1 8zM11 5 6 8v3l5-3z" fill={R} /><path d="M6 0v5" stroke="#7cae2f" strokeWidth="1.500" /></Svg>, false],
  ['着色', miniCube, true],
  ['实体', <Svg><path d="m0 3 4-2 4 2v5L4 10 0 8z" fill={L} /><path d="m4 5 4-2 4 2v4l-4 2-4-2z" fill={R} stroke="#8fd0e2" strokeWidth=".6" /></Svg>, true],
  ['剖面', <Svg><path d="m1 3.500 5-2.500 5 2v6l-5 3-5-3z" fill={R} /><path d="m6 6 5-3v6l-5 3z" fill={Y} /></Svg>, true],
  ['缩放窗口', <Svg><path d="M.500.500h11v11H.500z" fill="#a9d5e4" stroke="#2b7f9e" /><circle cx="6.500" cy="5.500" r="3.200" fill="#ffe694" stroke="#c29024" /><path d="m4 8-3 3" stroke="#b4821f" strokeWidth="1.500" /></Svg>, true],
  ['旋转中心', <Svg><circle cx="6" cy="6" r="3" stroke="#c9505a" strokeWidth="1.200" /><path d="M6 0v12M0 6h12" stroke="#c9505a" /></Svg>, true],
  ['局部', <Svg><path d="M1 1h10v10H1z" fill="#fff" stroke="#4d8fb0" /><path d="M3 7h2v2H3zM7 3h2v2H7z" fill="#4d8fb0" /></Svg>, false],
]

function Chip({ label, drop, hot, children }: { label: string; drop?: boolean; hot?: boolean; children: ReactNode }) {
  return (
    <button type="button" aria-label={label} className={clsx('flex h-4 shrink-0 items-center', hot && 'bg-[#fbdc7e] outline -outline-offset-1 outline-[#e2b94b]')}>
      <span className="flex w-4 justify-center">{children}</span>
      {drop && <span className="flex w-[9px] justify-center"><Caret /></span>}
    </button>
  )
}

function ViewBar() {
  return (
    <div className="flex">
      {VIEW.map(([label, icon, drop]) => <Chip key={label} label={label} drop={drop}>{icon}</Chip>)}
      <Chip label="基准" drop hot><Svg><path d="M4 1v6L1 11M4 7l7 2" stroke="#c4803a" strokeWidth="1.200" /><path d="m4 6 5-2" stroke="#7d9c45" /><path d="M9 8h2v2H9zM3 1h2v2H3z" fill="#c9505a" /></Svg></Chip>
      <Chip label="显示树" drop><Svg><path d="M1 1h5v4H1z" fill="#4f7d94" /><path d="M3 5v6h4M3 8h4" stroke="#888" /><path d="M7 2h4v3H7z" fill="#b3c1c8" /><circle cx="9.500" cy="8.500" r="2" fill="#f3cf42" /></Svg></Chip>
      <Chip label="材质"><Svg><path d="m0 4 6-3 6 3-6 3z" fill="#8ed3a0" /><path d="m0 4 6 3v4L0 8z" fill={L} /><path d="m12 4-6 3v4l6-3z" fill={R} /><path d="m3 3 5 3 3-1" stroke="#f1cb45" /></Svg></Chip>
      <Chip label="颜色"><span className="h-2 w-3 border border-[#a70c30] bg-[#fa0540]" /></Chip>
      <Chip label="背景"><span className="h-3 w-3 border border-[#76868e] bg-[#bce3f3]" /></Chip>
      <Chip label="曲面显示" drop><Svg><path d="m0 4 5-2 7 2-3 3H4z" fill="#54c0b4" /><path d="m1 6 4 4 6-4-2 1H4z" fill="#28859c" /></Svg></Chip>
      <div className="ml-px flex h-[15px] w-[81px] items-center border border-[#d7dadc] bg-white pl-1">
        <Svg s={8}><path d="M4 1a2 2 0 0 1 1 4v1H3V5a2 2 0 0 1 1-4z" fill="#fff4a5" stroke="#b6a14b" strokeWidth=".7" /></Svg>
        <Svg s={8}><circle cx="4" cy="4" r="3" fill="#e5d52f" stroke="#98a53b" strokeWidth=".7" /></Svg>
        <Combo label="图层" value="图层0000" className="h-3 flex-1" pad="pl-1.5" />
      </div>
    </div>
  )
}

function DatumTriad() {
  return (
    <svg viewBox="0 0 110 165" width="110" height="165" className="absolute top-[162px] left-[456px]" fontFamily="Noto Sans, sans-serif" fontSize="12" aria-hidden="true">
      <g fill="#b08850" fillOpacity=".09" stroke="#c9a574" strokeWidth=".9">
        <path d="M9 118 16 68l31-11-6 50z" />
        <path d="M9 118 16 68l42 15-7 50z" />
        <path d="m9 118 33-11 42 16-32 11z" />
      </g>
      <path d="m18 55 3-30M50 103l14-5M60 139l22 8" stroke="#c79a50" />
      <path d="m9 118 8-68" stroke="#3434e0" strokeWidth="1.200" />
      <path d="m9 118 42-15" stroke="#35b335" strokeWidth="1.200" />
      <path d="m9 118 55 20" stroke="#f02c2c" strokeWidth="1.200" />
      <path d="m18 41-4 12q3 2 7 0z" fill="#1c1ce6" />
      <path d="m21 18-4 12q3 1 5 0z" fill="#c98f22" /><path d="m21 18 2 12h-2z" fill="#6b4a0f" />
      <path d="m48 100 11 1-8 6q-4-2-3-7z" fill="#18a018" /><path d="m52 99 7 2-6 3z" fill="#0b4c0b" />
      <path d="m65 95 9 1-6 5q-4-2-3-6z" fill="#a8690c" /><path d="m69 95 5 1-5 3z" fill="#3d2907" />
      <path d="m62 135-1 6 14 2q-6-6-13-8z" fill="#ee1c24" />
      <path d="m84 143-2 5 11 3z" fill="#c98f22" /><path d="m83 147 10 4-11-3z" fill="#6b4a0f" />
      <g fill="#b3701c"><text x="19" y="13">Z</text><text x="77" y="98">Y</text><text x="98" y="158">X</text></g>
    </svg>
  )
}

function ViewTriad() {
  return (
    <svg viewBox="0 0 60 90" width="60" height="90" className="absolute bottom-[44px] left-[57px]" fontFamily="Noto Sans, sans-serif" fontSize="12" aria-hidden="true">
      <path d="m5 63 5-39" stroke="#3434f0" strokeWidth="1.200" /><path d="m5 63 24-8" stroke="#35c335" strokeWidth="1.200" /><path d="m5 63 32 12" stroke="#f53535" strokeWidth="1.200" />
      <path d="m10 16-4 11q3 2 6 0z" fill="#2424ee" />
      <path d="m27 52 9 1-7 5q-3-3-2-6z" fill="#18a018" /><path d="m30 52 6 1-5 3z" fill="#0b4c0b" />
      <path d="m36 72-2 5 11 1z" fill="#ee2a2a" />
      <text x="9" y="14" fill="#2424ee">Z</text><text x="37" y="55" fill="#35c335">Y</text><text x="47" y="84" fill="#f02424">X</text>
    </svg>
  )
}

function Workspace() {
  return (
    <main className="flex min-w-0 flex-1 flex-col pl-0.5">
      <div className="flex h-[14px] items-center text-[#4b4f52]">
        <div className="flex h-full w-[104px] items-center justify-center gap-1.5 bg-[#fcfcfd] pl-3">
          <span>* 零件003.Z3PRT</span>
          <IconButton label="关闭标签" className="w-2"><Svg s={8}><path d="m1 1 6 6m0-6L1 7" stroke="#8b7436" strokeWidth="1.700" /></Svg></IconButton>
        </div>
        <IconButton label="新建标签"><Svg s={8}><path d="M4 .500v7M.500 4h7" stroke="#a2a6a9" strokeWidth="1.300" /></Svg></IconButton>
        <span className="mr-1 ml-auto"><Svg s={8}><path d="M1 2h6" stroke="#777" /><path d="M1 4h6L4 7z" fill="#777" /></Svg></span>
      </div>
      <div className="relative min-h-0 flex-1 border-b border-[#c8cdd1] bg-white">
        <div className="flex">
          <p className="w-[255px] pt-px pl-[9px] text-[9px] leading-3 whitespace-nowrap text-[#111]">&lt;单击右键&gt;环境相关选项.<br />&lt;Shift +鼠标右键&gt;显示选择过滤器.</p>
          <ViewBar />
        </div>
        <DatumTriad />
        <ViewTriad />
        <span className="absolute bottom-0 left-px text-[12px] leading-3 text-[#111]">200mm</span>
      </div>
    </main>
  )
}

function StatusBar() {
  return (
    <footer className="flex h-[18px] items-center border-b border-[#bcc3cc] text-[#66696c]">
      <span className="mr-auto pl-[3px]">选择命令或实体</span>
      <Separator />
      <div className="ml-2 flex gap-1">
        <IconButton label="提示" className="h-[14px] w-[15px] border border-[#e2b94b] bg-[#fbe08a]"><Svg><path d="M1 1h10v10H1z" fill="#e5eaf5" /><path d="M1 1h10v2H1zM1 3h3v8H1z" fill="#7690c8" /><path d="M5 5h5M7.500 5v5" stroke="#b54356" strokeWidth="1.500" /></Svg></IconButton>
        <IconButton label="显示器"><Svg><path d="M1 2h10v6H1z" fill="#25b4cc" stroke="#4a8793" strokeWidth=".7" /><path d="M4 10h4" stroke="#333" strokeWidth="2" /></Svg></IconButton>
        <IconButton label="窗口"><Svg><path d="M1 1h10v10H1z" fill="#dce4f3" stroke="#6f8fc6" /><path d="M1 1h10v3H1z" fill="#5c82cd" /><path d="M3 6h6M3 8h6" stroke="#9ba8c0" /></Svg></IconButton>
      </div>
      <input aria-label="命令输入" className="ml-1 h-[14px] w-[245px] bg-white outline-none" />
    </footer>
  )
}

export default function App() {
  return (
    <div className="flex h-screen overflow-hidden bg-[#e1e5e8] font-['Noto_Sans','Noto_Sans_CJK_SC',sans-serif] text-[8px] leading-3">
      <Gradients />
      <div className="flex min-w-0 flex-1 flex-col">
        <header>
          <TitleBar />
          <TabBar />
          <Ribbon />
          <SelectionBar />
        </header>
        <div className="flex min-h-0 flex-1">
          <Manager />
          <Workspace />
        </div>
        <StatusBar />
        <div className="h-1.5 bg-[#d6dff1]" />
      </div>
      {/* screen edge behind the window */}
      <div className="flex w-[5px] flex-col bg-black">
        <div className="grow-[140]" />
        <div className="grow-[480] bg-[#3768b8]" />
        <div className="grow-[23] bg-[#d6dff1]" />
        <div className="grow-[75]" />
      </div>
    </div>
  )
}
